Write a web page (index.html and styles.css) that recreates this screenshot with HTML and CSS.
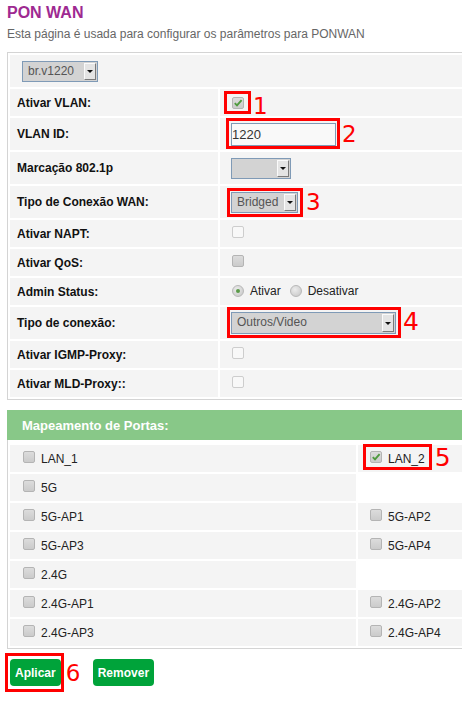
FILE: index.html
```html
<!DOCTYPE html>
<html lang="pt-BR">
<head>
    <meta charset="UTF-8">
    <meta name="viewport" content="width=device-width, initial-scale=1.0">
    <title>PON WAN</title>
    <link rel="stylesheet" href="styles.css">
</head>
<body>
    <h1 class="page-title">PON WAN</h1>
    <p class="page-desc">Esta página é usada para configurar os parâmetros para PONWAN</p>

    <div class="panel">
        <table class="form-table">
            <tr class="row-tall">
                <td colspan="2" class="cell-top">
                    <span class="select select-conn"><span class="select-text">br.v1220</span><span class="select-btn"></span></span>
                </td>
            </tr>
            <tr>
                <th>Ativar VLAN:</th>
                <td>
                    <span class="mark mark-1">
                        <span class="cb cb-checked"><svg viewBox="0 0 12 12" width="12" height="12"><path d="M2.8 6.2 L5 8.4 L9.6 3.2" fill="none" stroke="#4e9a3e" stroke-width="1.9"/></svg></span>
                        <span class="mark-num num-1">1</span>
                    </span>
                </td>
            </tr>
            <tr class="row-tall">
                <th>VLAN ID:</th>
                <td>
                    <span class="mark mark-2">
                        <span class="text-input">1220</span>
                        <span class="mark-num num-2">2</span>
                    </span>
                </td>
            </tr>
            <tr class="row-tall">
                <th>Marcação 802.1p</th>
                <td><span class="select select-prio"><span class="select-text"></span><span class="select-btn"></span></span></td>
            </tr>
            <tr class="row-tall">
                <th>Tipo de Conexão WAN:</th>
                <td>
                    <span class="mark mark-3">
                        <span class="select select-mode"><span class="select-text">Bridged</span><span class="select-btn"></span></span>
                        <span class="mark-num num-3">3</span>
                    </span>
                </td>
            </tr>
            <tr>
                <th>Ativar NAPT:</th>
                <td><span class="cb cb-off"></span></td>
            </tr>
            <tr>
                <th>Ativar QoS:</th>
                <td><span class="cb"></span></td>
            </tr>
            <tr>
                <th>Admin Status:</th>
                <td>
                    <span class="radio-group">
                        <span class="radio radio-on"></span><span class="radio-label">Ativar</span>
                        <span class="radio"></span><span class="radio-label">Desativar</span>
                    </span>
                </td>
            </tr>
            <tr class="row-tall">
                <th>Tipo de conexão:</th>
                <td>
                    <span class="mark mark-4">
                        <span class="select select-service"><span class="select-text">Outros/Video</span><span class="select-btn"></span></span>
                        <span class="mark-num num-4">4</span>
                    </span>
                </td>
            </tr>
            <tr>
                <th>Ativar IGMP-Proxy:</th>
                <td><span class="cb cb-off"></span></td>
            </tr>
            <tr>
                <th>Ativar MLD-Proxy::</th>
                <td><span class="cb cb-off"></span></td>
            </tr>
        </table>
    </div>

    <div class="ports-panel">
        <div class="ports-head">Mapeamento de Portas:</div>
        <div class="ports-body">
            <table class="ports-table">
                <tr>
                    <td class="col-left"><span class="port"><span class="cb"></span>LAN_1</span></td>
                    <td class="col-right">
                        <span class="mark mark-5">
                            <span class="port"><span class="cb cb-checked"><svg viewBox="0 0 12 12" width="12" height="12"><path d="M2.8 6.2 L5 8.4 L9.6 3.2" fill="none" stroke="#4e9a3e" stroke-width="1.9"/></svg></span>LAN_2</span>
                            <span class="mark-num num-5">5</span>
                        </span>
                    </td>
                </tr>
                <tr>
                    <td class="col-left"><span class="port"><span class="cb"></span>5G</span></td>
                    <td class="col-empty"></td>
                </tr>
                <tr>
                    <td class="col-left"><span class="port"><span class="cb"></span>5G-AP1</span></td>
                    <td class="col-right"><span class="port"><span class="cb"></span>5G-AP2</span></td>
                </tr>
                <tr>
                    <td class="col-left"><span class="port"><span class="cb"></span>5G-AP3</span></td>
                    <td class="col-right"><span class="port"><span class="cb"></span>5G-AP4</span></td>
                </tr>
                <tr>
                    <td class="col-left"><span class="port"><span class="cb"></span>2.4G</span></td>
                    <td class="col-empty"></td>
                </tr>
                <tr>
                    <td class="col-left"><span class="port"><span class="cb"></span>2.4G-AP1</span></td>
                    <td class="col-right"><span class="port"><span class="cb"></span>2.4G-AP2</span></td>
                </tr>
                <tr>
                    <td class="col-left"><span class="port"><span class="cb"></span>2.4G-AP3</span></td>
                    <td class="col-right"><span class="port"><span class="cb"></span>2.4G-AP4</span></td>
                </tr>
            </table>
        </div>
    </div>

    <div class="actions">
        <span class="mark mark-6">
            <button class="btn">Aplicar</button>
            <span class="mark-num num-6">6</span>
        </span>
        <button class="btn">Remover</button>
    </div>
</body>
</html>
```

FILE: styles.css
```css
html {
    overflow: hidden;
}
body {
    margin: 0;
    padding: 0 0 20px 7px;
    font-family: "Liberation Sans", Arial, sans-serif;
    font-size: 12px;
    color: #222;
    background-color: #fff;
}
.page-title {
    margin: 4px 0 0;
    font-size: 16px;
    line-height: 18px;
    color: #9e2a91;
}
.page-desc {
    margin: 5px 0 0;
    line-height: 14px;
    color: #666;
}

/* painel de configuração */
.panel {
    margin-top: 11px;
    width: 540px;
    border: 1px solid #d4d4d4;
}
.form-table {
    width: 100%;
    border-spacing: 2px;
}
.form-table th,
.form-table td {
    height: 27px;
    padding: 0 11px;
    background-color: #f4f4f4;
    vertical-align: middle;
    text-align: left;
}
.form-table th {
    width: 194px;
    padding: 0 7px;
    font-weight: bold;
    color: #111;
}
.form-table .row-tall th,
.form-table .row-tall td {
    height: 32px;
}
.form-table .cell-top {
    padding-left: 12px;
}

/* controles */
.select {
    display: inline-flex;
    box-sizing: border-box;
    height: 21px;
    border: 1px solid #7f9ab6;
    background-color: #d3d3d3;
    vertical-align: middle;
}
.select-conn { width: 76px; }
.select-prio { width: 60px; }
.select-mode { width: 67px; }
.select-service { width: 165px; height: 22px; }
.select-text {
    flex: 1;
    padding-left: 5px;
    line-height: 19px;
    color: #555;
    white-space: nowrap;
}
.select-btn {
    position: relative;
    width: 10px;
    margin: 1px 1px 1px 0;
    background-color: #e4e4e4;
    border: 1px solid;
    border-color: #fafafa #7a7a7a #7a7a7a #fafafa;
}
.select-btn::after {
    content: "";
    position: absolute;
    left: 2px;
    top: 50%;
    margin-top: -1px;
    border-left: 3px solid transparent;
    border-right: 3px solid transparent;
    border-top: 3px solid #111;
}
.text-input {
    display: inline-block;
    box-sizing: border-box;
    width: 105px;
    height: 23px;
    border: 1px solid #7f9ab6;
    background-color: #f9f9f9;
    font-size: 13px;
    line-height: 21px;
    color: #333;
    vertical-align: middle;
}
.cb {
    display: inline-block;
    box-sizing: border-box;
    width: 12px;
    height: 12px;
    margin: 0 0 3px 1px;
    border: 1px solid #b4b4b4;
    border-radius: 2px;
    background: linear-gradient(#dcdcdc, #cbcbcb);
    vertical-align: middle;
}
.cb svg {
    display: block;
    margin: -1px 0 0 -1px;
}
.cb-off {
    border-color: #cdcdcd;
    background: #f8f8f8;
}
.radio-group {
    display: inline-flex;
    align-items: center;
}
.radio {
    position: relative;
    box-sizing: border-box;
    width: 12px;
    height: 12px;
    margin-left: 1px;
    border: 1px solid #b8b8b8;
    border-radius: 50%;
    background: radial-gradient(circle at 40% 35%, #ececec, #c4c4c4);
}
.radio-on::after {
    content: "";
    position: absolute;
    left: 3px;
    top: 3px;
    width: 4px;
    height: 4px;
    border-radius: 50%;
    background-color: #5a9a48;
}
.radio-label {
    margin: 0 8px 0 6px;
}

/* marcações vermelhas */
.mark {
    position: relative;
    display: inline-block;
    vertical-align: middle;
}
.mark::after {
    content: "";
    position: absolute;
    border: 3px solid #f00;
    pointer-events: none;
}
.mark-1::after { inset: -6px -7px -5px -7px; }
.mark-2::after { inset: -5px -4px -3px -5px; }
.mark-3::after { inset: -4px -5px -4px -4px; }
.mark-4::after { inset: -5px -5px -4px -4px; }
.mark-5::after { inset: -7px -7px -3px -7px; }
.mark-6::after { inset: -6px -3px -6px -5px; }
.mark-1 .cb { display: block; margin: 0 0 0 1px; }
.mark-2 .text-input,
.mark-3 .select,
.mark-4 .select { display: flex; }
.mark-num {
    position: absolute;
    top: 50%;
    left: calc(100% + 8px);
    margin-top: -12px;
    font-family: "DejaVu Sans", sans-serif;
    font-size: 23px;
    line-height: 24px;
    color: #f00;
}
.num-1 { left: calc(100% + 9px); margin-top: -9px; }
.num-2 { left: calc(100% + 6px); }
.num-3 { left: calc(100% + 8px); }
.num-4 { left: calc(100% + 7px); font-size: 25px; margin-top: -13px; }
.num-5 { left: calc(100% + 10px); font-size: 25px; margin-top: -13px; }
.num-6 { left: calc(100% + 5px); }

/* mapeamento de portas */
.ports-panel {
    margin-top: 10px;
    width: 540px;
    border: 1px solid #d4d4d4;
    border-top: 0;
}
.ports-head {
    display: flex;
    align-items: center;
    height: 30px;
    margin: 0 -1px;
    padding-left: 15px;
    background-color: #88c888;
    color: #fff;
    font-size: 13px;
    font-weight: bold;
}
.ports-body {
    padding-top: 3px;
}
.ports-table {
    width: 100%;
    border-spacing: 2px;
}
.ports-table td {
    height: 27px;
    padding: 0;
    vertical-align: middle;
}
.ports-table .col-left {
    width: 333px;
    padding-left: 13px;
    background-color: #f4f4f4;
}
.ports-table .col-right {
    padding-left: 12px;
    background-color: #f4f4f4;
}
.port {
    display: inline-flex;
    align-items: center;
    gap: 6px;
    line-height: 14px;
    color: #222;
}
.port .cb {
    margin: 0 0 4px;
}

/* botões */
.actions {
    display: flex;
    gap: 32px;
    margin-top: 10px;
    padding-left: 3px;
}
.btn {
    display: block;
    height: 27px;
    padding: 0 5px;
    border: 0;
    border-radius: 4px;
    background-color: #00a33a;
    color: #fff;
    font-family: "Liberation Sans", Arial, sans-serif;
    font-size: 12px;
    font-weight: bold;
}
```
